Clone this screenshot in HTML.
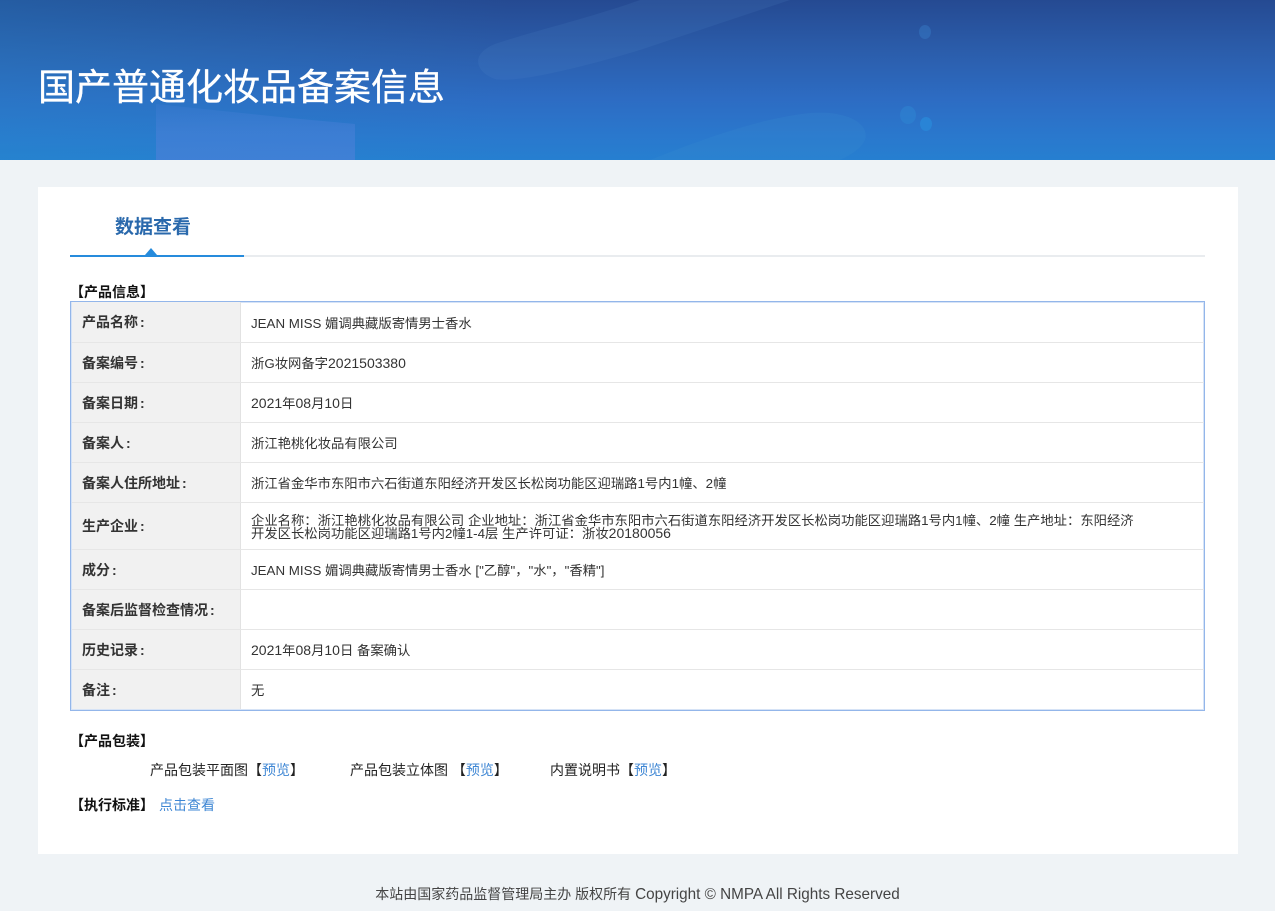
<!DOCTYPE html>
<html lang="zh-CN">
<head>
<meta charset="utf-8">
<title>国产普通化妆品备案信息</title>
<style>
*{box-sizing:border-box;margin:0;padding:0}
html,body{width:1275px;height:911px;overflow:hidden;background:#eff3f6;font-family:"Liberation Sans","Noto Sans CJK SC",sans-serif;color:#333}
#hd{position:absolute;left:0;top:0;width:1275px;height:160px;background:linear-gradient(90deg,rgba(36,140,205,.28) 0%,rgba(36,140,205,0) 40%),linear-gradient(180deg,#254a92 0%,#2b5dab 32%,#2d6cc3 62%,#2a78cd 85%,#267fd0 100%);overflow:hidden}
#hd svg{position:absolute;left:0;top:0}
h1{position:absolute;left:38px;top:63px;font-size:37px;line-height:50px;font-weight:400;color:#fff;white-space:nowrap;-webkit-text-stroke:.3px #fff}
#card{position:absolute;left:38px;top:187px;width:1200px;height:667px;background:#fff}
#tab{position:absolute;left:115px;top:214px;font-size:19px;line-height:28px;font-weight:700;color:#2a69ac}
#l1{position:absolute;left:70px;top:255px;width:1135px;height:2px;background:#e9ecef}
#l2{position:absolute;left:70px;top:255px;width:174px;height:2px;background:#268bdc}
#tri{position:absolute;left:145px;top:248px;width:0;height:0;border-left:6.5px solid transparent;border-right:6.5px solid transparent;border-bottom:7px solid #268bdc}
.sec{position:absolute;font-size:14px;line-height:18px;font-weight:700;color:#111;white-space:nowrap}
#tb{position:absolute;left:70px;top:301px;width:1135px;height:410px;border:1px solid #93b6ea;box-shadow:inset 0 0 0 1px #d6e3f6;background:#fff}
.r{position:absolute;left:1px;width:1132px;border-bottom:1px solid #e6e6e6}
.k{position:absolute;left:0;top:0;bottom:0;width:169px;background:#f1f1f1;border-right:1px solid #e2e2e2;padding-left:10px;font-size:14px;font-weight:700;color:#333;display:flex;align-items:center;white-space:nowrap}
.k i{font-style:normal;margin-left:2px}
.v{position:absolute;left:179px;top:1px;bottom:0;width:890px;font-size:13.33px;color:#333;display:flex;align-items:center;white-space:nowrap}
.v span{display:block;line-height:13px}
.n{font-size:14px;font-weight:400}
.t{position:absolute;font-size:14px;line-height:18px;color:#222;white-space:nowrap}
.t a{color:#3f87d4;text-decoration:none}
#ft{position:absolute;left:0;top:884px;width:1275px;text-align:center;font-size:14px;line-height:20px;color:#444;white-space:nowrap}
#ft b{font-weight:400;font-size:15.27px}
</style>
</head>
<body>
<div id="hd">
<svg width="1275" height="160" viewBox="0 0 1275 160">
<defs><linearGradient id="g" x1="0" y1="0" x2="0" y2="1"><stop offset="0" stop-color="#4a80d8" stop-opacity=".2"/><stop offset=".5" stop-color="#4a80d8" stop-opacity=".55"/><stop offset="1" stop-color="#4a80d8" stop-opacity=".7"/></linearGradient></defs>
<path d="M156 160V104L290 118L355 124V160Z" fill="url(#g)"/>
<path d="M640 0C590 18 530 32 495 44C470 54 475 72 495 79C520 84 600 62 640 50L790 0Z" fill="#5a90d0" opacity=".13"/>
<path d="M650 160C700 140 760 118 810 113C850 110 870 125 865 140C860 150 850 155 840 160Z" fill="#3a92d4" opacity=".2"/>
<ellipse cx="925" cy="32" rx="6" ry="7" fill="#3a82cc" opacity=".4"/>
<ellipse cx="908" cy="115" rx="8" ry="9" fill="#2f8ad4" opacity=".45"/>
<ellipse cx="926" cy="124" rx="6" ry="7" fill="#2a8ada" opacity=".75"/>
</svg>
<h1>国产普通化妆品备案信息</h1>
</div>
<div id="card"></div>
<div id="tab">数据查看</div>
<div id="l1"></div><div id="l2"></div><div id="tri"></div>
<div class="sec" style="left:70px;top:283px">【产品信息】</div>
<div id="tb">
<div class="r" style="top:0;height:41px"><div class="k">产品名称<i>:</i></div><div class="v" style="top:2px"><span>JEAN MISS 媚调典藏版寄情男士香水</span></div></div>
<div class="r" style="top:41px;height:40px"><div class="k">备案编号<i>:</i></div><div class="v"><span>浙G妆网备字<b class="n">2021503380</b></span></div></div>
<div class="r" style="top:81px;height:40px"><div class="k">备案日期<i>:</i></div><div class="v"><span><b class="n">2021</b>年<b class="n">08</b>月<b class="n">10</b>日</span></div></div>
<div class="r" style="top:121px;height:40px"><div class="k">备案人<i>:</i></div><div class="v"><span>浙江艳桃化妆品有限公司</span></div></div>
<div class="r" style="top:161px;height:40px"><div class="k">备案人住所地址<i>:</i></div><div class="v"><span>浙江省金华市东阳市六石街道东阳经济开发区长松岗功能区迎瑞路1号内1幢、2幢</span></div></div>
<div class="r" style="top:201px;height:47px"><div class="k">生产企业<i>:</i></div><div class="v"><span>企业名称：浙江艳桃化妆品有限公司 企业地址：浙江省金华市东阳市六石街道东阳经济开发区长松岗功能区迎瑞路1号内1幢、2幢 生产地址：东阳经济<br>开发区长松岗功能区迎瑞路1号内2幢1-4层 生产许可证：浙妆<b class="n">20180056</b></span></div></div>
<div class="r" style="top:248px;height:40px"><div class="k">成分<i>:</i></div><div class="v"><span>JEAN MISS 媚调典藏版寄情男士香水 ["乙醇"，"水"，"香精"]</span></div></div>
<div class="r" style="top:288px;height:40px"><div class="k">备案后监督检查情况<i>:</i></div><div class="v"></div></div>
<div class="r" style="top:328px;height:40px"><div class="k">历史记录<i>:</i></div><div class="v"><span><b class="n">2021</b>年<b class="n">08</b>月<b class="n">10</b>日 备案确认</span></div></div>
<div class="r" style="top:368px;height:39px;border-bottom:0"><div class="k">备注<i>:</i></div><div class="v"><span>无</span></div></div>
</div>
<div class="sec" style="left:70px;top:732px">【产品包装】</div>
<div class="t" style="left:150px;top:761px">产品包装平面图【<a>预览</a>】</div>
<div class="t" style="left:350px;top:761px">产品包装立体图 【<a>预览</a>】</div>
<div class="t" style="left:550px;top:761px">内置说明书【<a>预览</a>】</div>
<div class="sec" style="left:70px;top:796px">【执行标准】</div>
<div class="t" style="left:159px;top:796px;color:#3f87d4">点击查看</div>
<div id="ft">本站由国家药品监督管理局主办 版权所有 <b>Copyright © NMPA All Rights Reserved</b></div>
</body>
</html>
